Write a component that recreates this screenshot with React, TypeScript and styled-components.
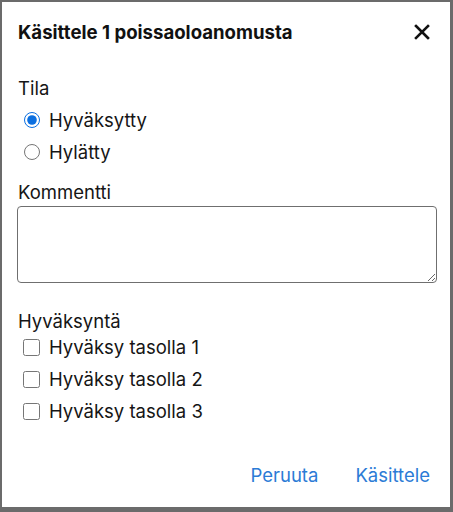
import React from "react";
import styled, { createGlobalStyle } from "styled-components";

const Global = createGlobalStyle`
  html, body { margin: 0; padding: 0; height: 100%; }
  body { background: #6b6b6b; font-family: Inter, "Noto Sans", sans-serif; }
  #root { height: 100%; }
`;

const Frame = styled.div`
  height: 512px;
  box-sizing: border-box;
  padding: 2px 3px 5px 2px;
  display: flex;
`;

const Dialog = styled.div`
  flex: 1;
  background: #fff;
  display: flex;
  flex-direction: column;
  color: #151515;
`;

const Header = styled.div`
  display: flex;
  align-items: center;
  justify-content: space-between;
  padding: 20px 18px 0 16px;
  height: 20px;
`;

const Title = styled.h2`
  margin: 0;
  font-size: 18.6px;
  font-weight: 700;
  color: #111;
`;

const CloseButton = styled.button`
  border: 0;
  background: none;
  padding: 0;
  width: 20px;
  height: 20px;
  display: flex;
  align-items: center;
  justify-content: center;
  cursor: pointer;
`;

const Body = styled.div`
  flex: 1;
  padding: 33px 13px 0 16px;
  display: flex;
  flex-direction: column;
`;

const Section = styled.div<{ $gap?: number }>`
  display: flex;
  flex-direction: column;
  margin-bottom: ${(p) => p.$gap ?? 0}px;
`;

const Label = styled.div`
  font-size: 18.5px;
  line-height: 26px;
  color: #151515;
`;

const Options = styled.div<{ $offset: number }>`
  display: flex;
  flex-direction: column;
  margin-top: ${(p) => p.$offset}px;
`;

const OptionRow = styled.label`
  display: flex;
  align-items: center;
  height: 32px;
  font-size: 18.5px;
  color: #151515;
  padding-left: 6px;
`;

const Radio = styled.input.attrs({ type: "radio" })`
  width: 16px;
  height: 16px;
  margin: 0 9px 0 0;
  accent-color: #0b6fe0;
`;

const Check = styled.input.attrs({ type: "checkbox" })`
  width: 17px;
  height: 17px;
  margin: 0 9px 0 -1px;
`;

const TextArea = styled.textarea`
  margin: 1px 0 0 -1px;
  height: 77px;
  box-sizing: border-box;
  border: 1px solid #6f6f6f;
  border-radius: 4px;
  font-family: inherit;
  font-size: 16px;
  resize: vertical;
`;

const Actions = styled.div`
  display: flex;
  justify-content: flex-end;
  padding: 0 16px 15px 0;
`;

const TextButton = styled.button<{ $ml?: number }>`
  border: 0;
  background: none;
  font-family: inherit;
  font-size: 18.5px;
  color: #2b7bd6;
  padding: 6px 4px;
  margin-left: ${(p) => p.$ml ?? 0}px;
  cursor: pointer;
`;

export default function App() {
  return (
    <>
      <Global />
      <Frame>
        <Dialog>
          <Header>
            <Title>Käsittele 1 poissaoloanomusta</Title>
            <CloseButton aria-label="Sulje">
              <svg width="16" height="16" viewBox="0 0 16 16">
                <path d="M2 2 L14 14 M14 2 L2 14" stroke="#111" strokeWidth="2.6" strokeLinecap="square" />
              </svg>
            </CloseButton>
          </Header>
          <Body>
            <Section $gap={11}>
              <Label>Tila</Label>
              <Options $offset={3}>
                <OptionRow>
                  <Radio name="tila" defaultChecked />
                  Hyväksytty
                </OptionRow>
                <OptionRow>
                  <Radio name="tila" />
                  Hylätty
                </OptionRow>
              </Options>
            </Section>
            <Section $gap={25}>
              <Label>Kommentti</Label>
              <TextArea />
            </Section>
            <Section>
              <Label>Hyväksyntä</Label>
              <Options $offset={-3}>
                <OptionRow>
                  <Check />
                  Hyväksy tasolla 1
                </OptionRow>
                <OptionRow>
                  <Check />
                  Hyväksy tasolla 2
                </OptionRow>
                <OptionRow>
                  <Check />
                  Hyväksy tasolla 3
                </OptionRow>
              </Options>
            </Section>
          </Body>
          <Actions>
            <TextButton>Peruuta</TextButton>
            <TextButton $ml={29}>Käsittele</TextButton>
          </Actions>
        </Dialog>
      </Frame>
    </>
  );
}
